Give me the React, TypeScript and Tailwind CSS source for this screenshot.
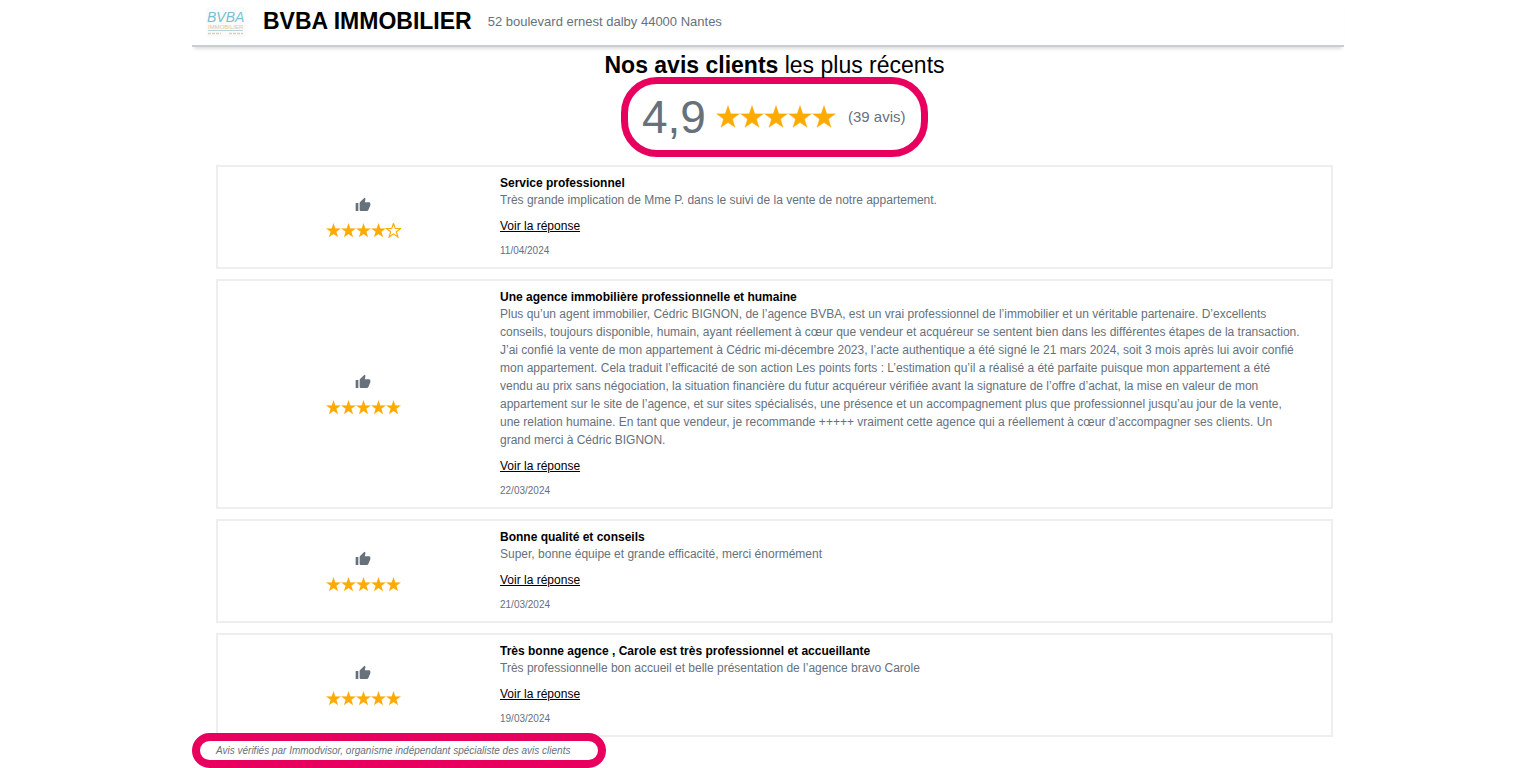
import React from 'react';
import { MdThumbUp } from 'react-icons/md';

interface Review {
  title: string;
  text: string;
  date: string;
  rating: number;
}

const reviews: Review[] = [
  {
    title: "Service professionnel",
    text: "Très grande implication de Mme P. dans le suivi de la vente de notre appartement.",
    date: "11/04/2024",
    rating: 4
  },
  {
    title: "Une agence immobilière professionnelle et humaine",
    text: "Plus qu’un agent immobilier, Cédric BIGNON, de l’agence BVBA, est un vrai professionnel de l’immobilier et un véritable partenaire. D’excellents conseils, toujours disponible, humain, ayant réellement à cœur que vendeur et acquéreur se sentent bien dans les différentes étapes de la transaction. J’ai confié la vente de mon appartement à Cédric mi-décembre 2023, l’acte authentique a été signé le 21 mars 2024, soit 3 mois après lui avoir confié mon appartement. Cela traduit l’efficacité de son action Les points forts : L’estimation qu’il a réalisé a été parfaite puisque mon appartement a été vendu au prix sans négociation, la situation financière du futur acquéreur vérifiée avant la signature de l’offre d’achat, la mise en valeur de mon appartement sur le site de l’agence, et sur sites spécialisés, une présence et un accompagnement plus que professionnel jusqu’au jour de la vente, une relation humaine. En tant que vendeur, je recommande +++++ vraiment cette agence qui a réellement à cœur d’accompagner ses clients. Un grand merci à Cédric BIGNON.",
    date: "22/03/2024",
    rating: 5
  },
  {
    title: "Bonne qualité et conseils",
    text: "Super, bonne équipe et grande efficacité, merci énormément",
    date: "21/03/2024",
    rating: 5
  },
  {
    title: "Très bonne agence , Carole est très professionnel et accueillante",
    text: "Très professionnelle bon accueil et belle présentation de l’agence bravo Carole",
    date: "19/03/2024",
    rating: 5
  }
];

function Star({ filled, className }: { filled: boolean; className: string }) {
  return (
    <svg viewBox="0 0 24 24" className={className} aria-hidden="true">
      <path
        d="M12 0.5 L14.8 8.8 H23.5 L16.5 14 L19.1 22.5 L12 17.4 L4.9 22.5 L7.5 14 L0.5 8.8 H9.2 Z"
        fill={filled ? '#ffaa00' : 'none'}
        stroke="#ffaa00"
        strokeWidth={filled ? 0.3 : 1.8}
      />
    </svg>
  );
}

function Stars({ rating, large = false }: { rating: number; large?: boolean }) {
  return (
    <div className="flex" role="img" aria-label={`${rating} sur 5`}>
      {[1, 2, 3, 4, 5].map((n) => (
        <Star key={n} filled={n <= rating} className={large ? 'size-6' : 'size-[15px]'} />
      ))}
    </div>
  );
}

function Logo() {
  return (
    <svg viewBox="0 0 40 30" className="h-[30px] w-10" role="img" aria-label="BVBA">
      <defs>
        <linearGradient id="logo" x1="0" x2="1">
          <stop offset="0" stopColor="#6fc0d8" />
          <stop offset="0.6" stopColor="#7dbcc4" />
          <stop offset="1" stopColor="#7cc8e2" />
        </linearGradient>
      </defs>
      <rect width="40" height="30" fill="#fafcfc" />
      <text x="1" y="15" fontFamily="Liberation Sans" fontStyle="italic" fontSize="14" fill="url(#logo)">BVBA</text>
      <text x="2" y="22" fontFamily="Liberation Sans" fontSize="6" fill="#e0c4a6">IMMOBILIER</text>
      <path d="M2 23.5H37" stroke="#b5d3da" />
      <path d="M2 26.5H15M23 26.5H37" stroke="#d9cdbf" strokeWidth="1.5" strokeDasharray="3 1" />
    </svg>
  );
}

function ReviewCard({ review }: { review: Review }) {
  return (
    <article className="flex border-2 border-[#eeeeee] py-2">
      <div className="flex w-[282px] shrink-0 flex-col items-center justify-center gap-2.5 pl-2">
        <MdThumbUp className="size-4 text-[#66717c]" />
        <Stars rating={review.rating} />
      </div>
      <div className="min-w-0 flex-1 pr-7">
        <h3 className="text-xs leading-4 font-bold text-black">{review.title}</h3>
        <p className="text-xs leading-[18px]">{review.text}</p>
        <a href="#" className="mt-2 block w-fit text-xs leading-[18px] text-black underline">Voir la réponse</a>
        <time className="mt-2 block text-[10px] leading-4">{review.date}</time>
      </div>
    </article>
  );
}

export default function App() {
  return (
    <div className="mx-auto w-3/4 bg-white font-['Liberation_Sans',Arial,sans-serif] text-[#66717c]">
      <header className="flex h-[47px] items-center border-b-2 border-[#c9ced1] pl-[14px] pb-0.5 shadow-[0_4px_3px_-2px_#00000022]">
        <Logo />
        <h1 className="ml-[17px] text-[23px] font-bold text-black">BVBA IMMOBILIER</h1>
        <p className="ml-4 text-[13px]">52 boulevard ernest dalby 44000 Nantes</p>
      </header>

      <main className="pl-6 pr-[11px] pt-1.5">
        <h2 className="text-center text-[23px] leading-6 text-black">
          <strong>Nos avis clients</strong> les plus récents
        </h2>
        <div className="mx-auto flex h-20 w-[307px] items-center rounded-[36px] border-[7px] border-[#e8005f] pl-[14px]">
          <span className="text-[46px]">4,9</span>
          <div className="ml-2.5">
            <Stars rating={5} large />
          </div>
          <span className="ml-3 text-[15px]">(39 avis)</span>
        </div>

        <section className="mt-2 flex flex-col gap-2.5">
          {reviews.map((review) => (
            <ReviewCard key={review.date} review={review} />
          ))}
        </section>
      </main>

      <footer className="relative -mt-1 w-fit rounded-full border-8 border-[#e8005f] bg-white pl-4 pr-7 text-[10px] leading-[19px] italic">
        Avis vérifiés par Immodvisor, organisme indépendant spécialiste des avis clients
      </footer>
    </div>
  );
}
